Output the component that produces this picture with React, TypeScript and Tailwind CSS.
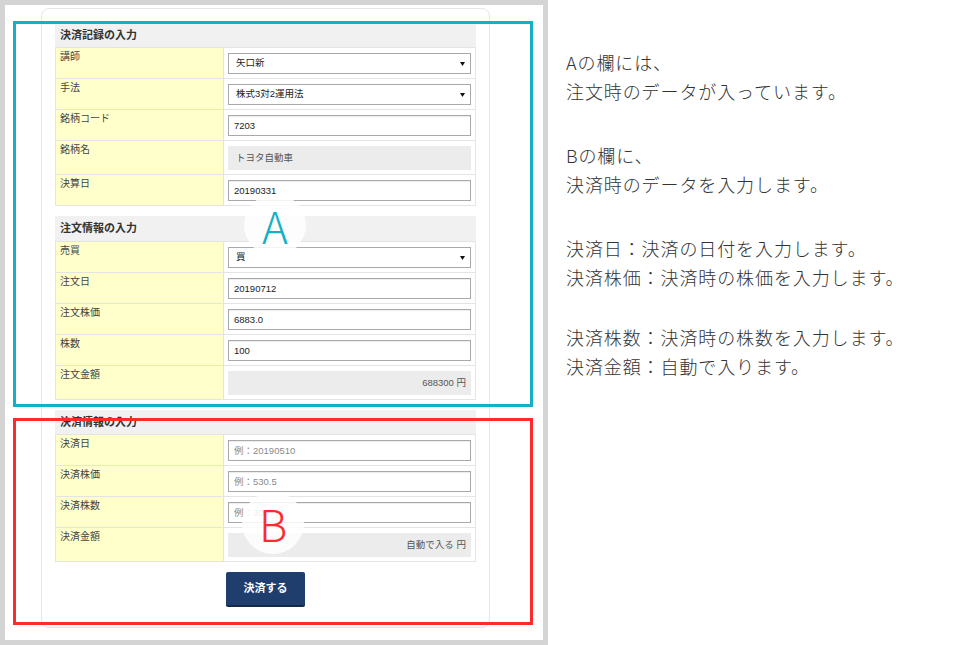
import React from 'react';

type Field =
  | { kind: 'select'; label: string; value: string }
  | { kind: 'input'; label: string; value?: string; placeholder?: string }
  | { kind: 'static'; label: string; value: string }
  | { kind: 'amount'; label: string; value: string };

const sections: { title: string; mt: string; headerH: string; fields: Field[] }[] = [
  {
    title: '決済記録の入力',
    mt: 'mt-0',
    headerH: 'h-[25px]',
    fields: [
      { kind: 'select', label: '講師', value: '矢口新' },
      { kind: 'select', label: '手法', value: '株式3対2運用法' },
      { kind: 'input', label: '銘柄コード', value: '7203' },
      { kind: 'static', label: '銘柄名', value: 'トヨタ自動車' },
      { kind: 'input', label: '決算日', value: '20190331' },
    ],
  },
  {
    title: '注文情報の入力',
    mt: 'mt-[10px]',
    headerH: 'h-[26px]',
    fields: [
      { kind: 'select', label: '売買', value: '買' },
      { kind: 'input', label: '注文日', value: '20190712' },
      { kind: 'input', label: '注文株価', value: '6883.0' },
      { kind: 'input', label: '株数', value: '100' },
      { kind: 'amount', label: '注文金額', value: '688300 円' },
    ],
  },
  {
    title: '決済情報の入力',
    mt: 'mt-[10px]',
    headerH: 'h-[25px]',
    fields: [
      { kind: 'input', label: '決済日', placeholder: '例：20190510' },
      { kind: 'input', label: '決済株価', placeholder: '例：530.5' },
      { kind: 'input', label: '決済株数', placeholder: '例：300' },
      { kind: 'amount', label: '決済金額', value: '自動で入る 円' },
    ],
  },
];

const notes = [
  { mt: 'mt-0', lines: ['Aの欄には、', '注文時のデータが入っています。'] },
  { mt: 'mt-[36px]', lines: ['Bの欄に、', '決済時のデータを入力します。'] },
  { mt: 'mt-[36px]', lines: ['決済日：決済の日付を入力します。', '決済株価：決済時の株価を入力します。'] },
  { mt: 'mt-[32px]', lines: ['決済株数：決済時の株数を入力します。', '決済金額：自動で入ります。'] },
];

const FieldValue = ({ field }: { field: Field }) => {
  if (field.kind === 'select') {
    return (
      <div className="flex h-[21px] items-center justify-between border border-[#a9a9a9] bg-white pl-[7px] pr-[5px] text-[9.5px] text-[#222]">
        <span>{field.value}</span>
        <svg width="5" height="4" viewBox="0 0 5 4">
          <polygon points="0,0 5,0 2.5,4" fill="#111" />
        </svg>
      </div>
    );
  }
  if (field.kind === 'input') {
    return (
      <input
        readOnly
        defaultValue={field.value}
        placeholder={field.placeholder}
        className="block h-[21px] w-full border border-[#a9a9a9] bg-white px-[5px] text-[9.5px] text-[#222] shadow-[inset_0_1px_1px_rgba(0,0,0,0.08)] outline-none placeholder:text-[#8a8a8a]"
      />
    );
  }
  if (field.kind === 'static') {
    return (
      <div className="flex h-[24px] items-center bg-[#ececec] pl-[8px] text-[9.5px] text-[#555]">
        {field.value}
      </div>
    );
  }
  return (
    <div className="flex h-[24px] items-center justify-end bg-[#ececec] pr-[5px] text-[9.5px] text-[#555]">
      {field.value}
    </div>
  );
};

const FormSection = ({ section }: { section: (typeof sections)[number] }) => (
  <div className={section.mt}>
    <div
      className={`${section.headerH} flex items-center border-b border-[#e4e4e4] bg-[#f1f1f1] pl-[5px] text-[11px] font-bold text-[#333]`}
    >
      {section.title}
    </div>
    <div className="border-x border-[#e6e6e6]">
      {section.fields.map((field) => (
        <div
          key={field.label}
          className="grid grid-cols-[168px_1fr] border-b border-[#e4e4e4]"
        >
          <div className="border-r border-[#e4e4e4] bg-[#ffffcc] pl-[4px] pt-[2px] text-[10px] leading-[14px] text-[#444]">
            {field.label}
          </div>
          <div className="px-[4px] pb-[4px] pt-[5px]">
            <FieldValue field={field} />
          </div>
        </div>
      ))}
    </div>
  </div>
);

const App = () => {
  return (
    <div className="flex h-[645px] w-[980px] bg-white font-['Liberation_Sans','Noto_Sans_CJK_JP',sans-serif]">
      <div className="h-full w-[548px] shrink-0 bg-[#d4d4d4] p-[5px]">
        <div className="relative h-full w-full bg-white pl-[36px] pt-[3px]">
          <div className="h-[620px] w-[449px] rounded-lg border border-[#e6e6e6] px-[13px] pt-[14px]">
            {sections.map((section) => (
              <FormSection
                key={section.title}
                section={section}
              />
            ))}
            <div className="mt-[10px] flex justify-center">
              <button className="h-[35px] w-[79px] rounded-[2px] border-b-2 border-[#13284a] bg-[#1f3e6e] text-[11px] font-bold text-white">
                決済する
              </button>
            </div>
          </div>

          {/* A / B overlays */}
          <div className="absolute left-[8px] top-[16px] h-[386px] w-[520px] border-[3px] border-[#13b0c5]" />
          <div className="absolute left-[8px] top-[413px] h-[207px] w-[520px] border-[3px] border-[#fd2b2b]" />
          <div className="absolute left-[239px] top-[189px] flex h-[62px] w-[62px] items-center justify-center rounded-full bg-white/85 font-['Noto_Sans_CJK_JP',sans-serif] text-[44px] font-light leading-none text-[#13b0c5]">
            A
          </div>
          <div className="absolute left-[237px] top-[487px] flex h-[62px] w-[62px] items-center justify-center rounded-full bg-white/85 font-['Noto_Sans_CJK_JP',sans-serif] text-[44px] font-light leading-none text-[#fd2b2b]">
            B
          </div>
        </div>
      </div>

      <div className="flex-1 pl-[18px] pt-[48px] font-['Noto_Sans_CJK_JP',sans-serif] text-[18px] font-light leading-[28.5px] tracking-[0.9px] text-[#333]">
        {notes.map((note, i) => (
          <div
            key={i}
            className={note.mt}
          >
            {note.lines.map((line) => (
              <p key={line}>{line}</p>
            ))}
          </div>
        ))}
      </div>
    </div>
  );
};

export default App;
